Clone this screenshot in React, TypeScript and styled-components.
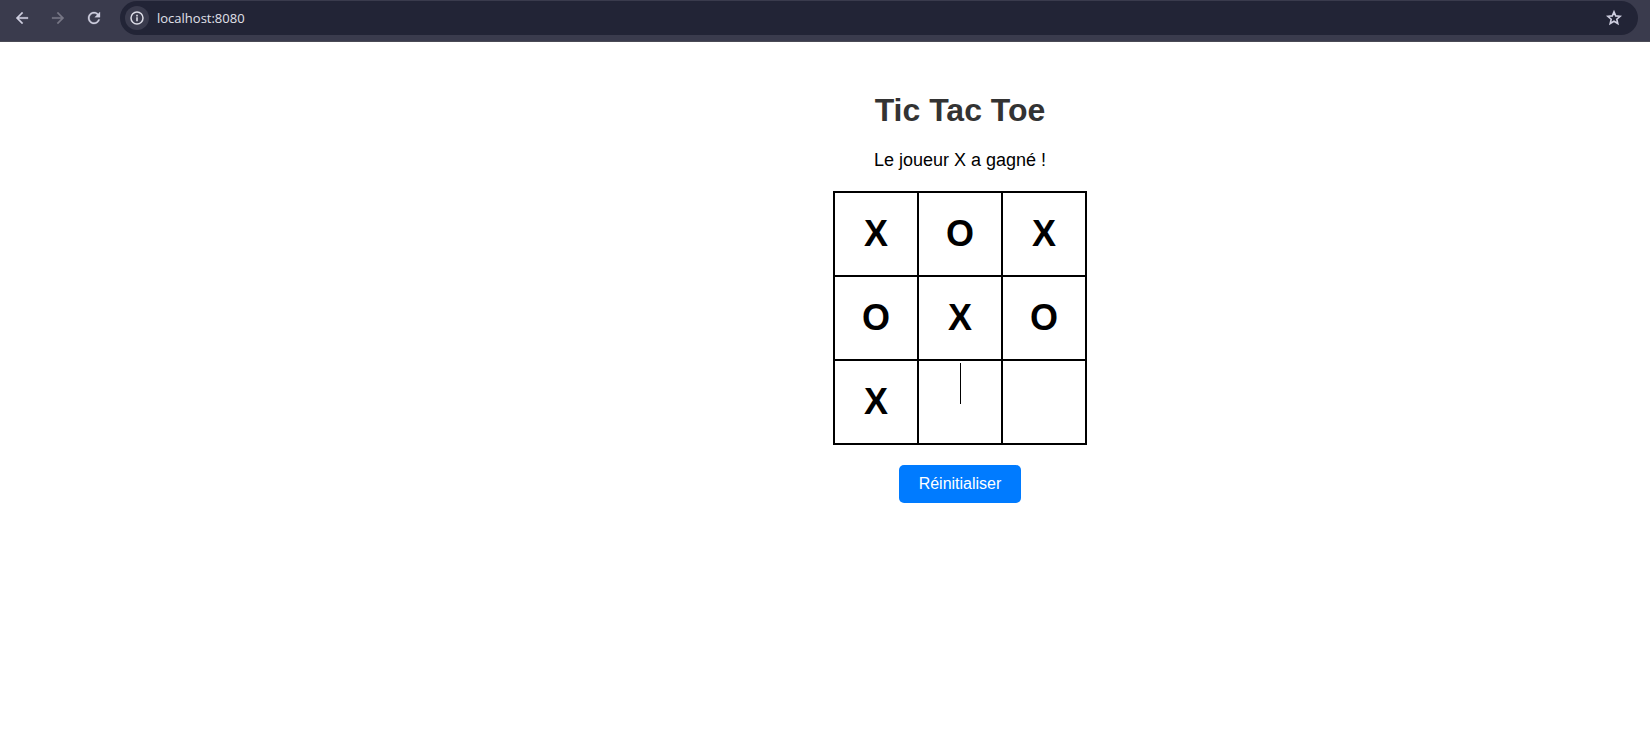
import React, { useState } from "react";
import styled, { createGlobalStyle } from "styled-components";

const GlobalStyle = createGlobalStyle`
  *, *::before, *::after { box-sizing: border-box; }
  body {
    margin: 0;
    background: #fff;
    color: #000;
    font-family: Arial, "Liberation Sans", sans-serif;
  }
`;

const Toolbar = styled.header`
  display: flex;
  align-items: flex-start;
  height: 42px;
  padding: 1px 12px 0 4px;
  background: #3a3b4d;
  border-bottom: 1px solid #4a4a55;
`;

const Nav = styled.nav`
  display: flex;
  padding-right: 8px;
`;

const IconButton = styled.button<{ $dim?: boolean }>`
  display: flex;
  align-items: center;
  justify-content: center;
  width: 36px;
  height: 34px;
  padding: 0;
  border: 0;
  background: none;
  color: ${(p) => (p.$dim ? "#777786" : "#cfcfe0")};
`;

const AddressBar = styled.div`
  display: flex;
  flex: 1;
  align-items: center;
  height: 34px;
  padding: 0 6px 0 5px;
  border-radius: 17px;
  background: #222436;
`;

const SiteInfo = styled.button`
  display: flex;
  align-items: center;
  justify-content: center;
  width: 24px;
  height: 24px;
  padding: 0;
  border: 0;
  border-radius: 50%;
  background: #3a3b4d;
  color: #dcdce6;
`;

const Url = styled.input`
  flex: 1;
  min-width: 0;
  margin-left: 8px;
  padding: 0;
  border: 0;
  outline: 0;
  background: none;
  color: #e0e0ea;
  font: 13px/20px "Segoe UI", "Open Sans", sans-serif;
`;

const Main = styled.main`
  display: flex;
  flex-direction: column;
  align-items: center;
  padding: 50px 0 20px 270px;
`;

const Title = styled.h1`
  margin: 0;
  color: #333;
  font-size: 32px;
  line-height: 37px;
`;

const Status = styled.p`
  margin: 20px 0;
  font-size: 18px;
  line-height: 22px;
`;

const Board = styled.div`
  display: grid;
  grid-template-columns: repeat(3, 82px);
  grid-auto-rows: 82px;
  gap: 2px;
  padding: 2px;
  background: #000;
`;

const Cell = styled.button`
  display: flex;
  align-items: center;
  justify-content: center;
  padding: 0 0 2px;
  border: 0;
  background: #fff;
  color: #000;
  font: bold 36px/41px Arial, "Liberation Sans", sans-serif;
`;

const Caret = styled.span`
  align-self: flex-start;
  width: 1px;
  height: 41px;
  margin: 2px 0 0 1px;
  background: #000;
`;

const ResetButton = styled.button`
  margin-top: 20px;
  padding: 10px 20px;
  border: 0;
  border-radius: 5px;
  background: #007bff;
  color: #fff;
  font: 16px/18px Arial, "Liberation Sans", sans-serif;
  cursor: pointer;
`;

const Icon = ({ d }: { d: string }) => (
  <svg
    width={18}
    height={18}
    viewBox="0 0 24 24"
    fill="currentColor"
    stroke="currentColor"
    strokeWidth={0.4}
    aria-hidden="true"
  >
    <path d={d} />
  </svg>
);

const InfoIcon = () => (
  <svg width={16} height={16} viewBox="0 0 16 16" fill="none" stroke="currentColor" aria-hidden="true">
    <circle cx="8" cy="8" r="6" strokeWidth={1.5} />
    <path d="M8 7.3v3.9M8 4.8v1.6" strokeWidth={1.6} />
  </svg>
);

const StarIcon = () => (
  <svg width={18} height={18} viewBox="0 0 18 18" fill="none" stroke="currentColor" aria-hidden="true">
    <path
      d="M9 2.9l1.7 4 4.4.4-3.3 2.9 1 4.3L9 12.2l-3.8 2.3 1-4.3L2.9 7.3l4.4-.4z"
      strokeWidth={1.6}
    />
  </svg>
);

const BACK = "M20 11H7.83l5.59-5.59L12 4l-8 8 8 8 1.41-1.41L7.83 13H20v-2z";
const FORWARD = "M12 4l-1.41 1.41L16.17 11H4v2h12.17l-5.58 5.59L12 20l8-8z";
const RELOAD =
  "M17.65 6.35C16.2 4.9 14.21 4 12 4c-4.42 0-7.99 3.58-7.99 8s3.57 8 7.99 8c3.73 0 6.84-2.55 7.73-6h-2.08c-.82 2.33-3.04 4-5.65 4-3.31 0-6-2.69-6-6s2.69-6 6-6c1.66 0 3.14.69 4.22 1.78L13 11h7V4l-2.35 2.35z";

const START = ["X", "O", "X", "O", "X", "O", "X", "", ""];
const ACTIVE_CELL = 7;

export default function App() {
  const [cells, setCells] = useState<string[]>(START);
  const won = cells[2] === "X" && cells[4] === "X" && cells[6] === "X";

  return (
    <>
      <GlobalStyle />
      <Toolbar>
        <Nav aria-label="Navigation">
          <IconButton aria-label="Retour"><Icon d={BACK} /></IconButton>
          <IconButton aria-label="Avancer" $dim><Icon d={FORWARD} /></IconButton>
          <IconButton aria-label="Actualiser"><Icon d={RELOAD} /></IconButton>
        </Nav>
        <AddressBar>
          <SiteInfo aria-label="Informations sur le site"><InfoIcon /></SiteInfo>
          <Url aria-label="Adresse" defaultValue="localhost:8080" />
          <IconButton aria-label="Favori"><StarIcon /></IconButton>
        </AddressBar>
      </Toolbar>
      <Main>
        <Title>Tic Tac Toe</Title>
        <Status role="status">{won ? "Le joueur X a gagné !" : "Au tour du joueur X"}</Status>
        <Board>
          {cells.map((mark, i) => (
            <Cell key={i} aria-label={`Case ${i + 1}`}>
              {mark || (i === ACTIVE_CELL && <Caret />)}
            </Cell>
          ))}
        </Board>
        <ResetButton onClick={() => setCells(Array(9).fill(""))}>Réinitialiser</ResetButton>
      </Main>
    </>
  );
}
